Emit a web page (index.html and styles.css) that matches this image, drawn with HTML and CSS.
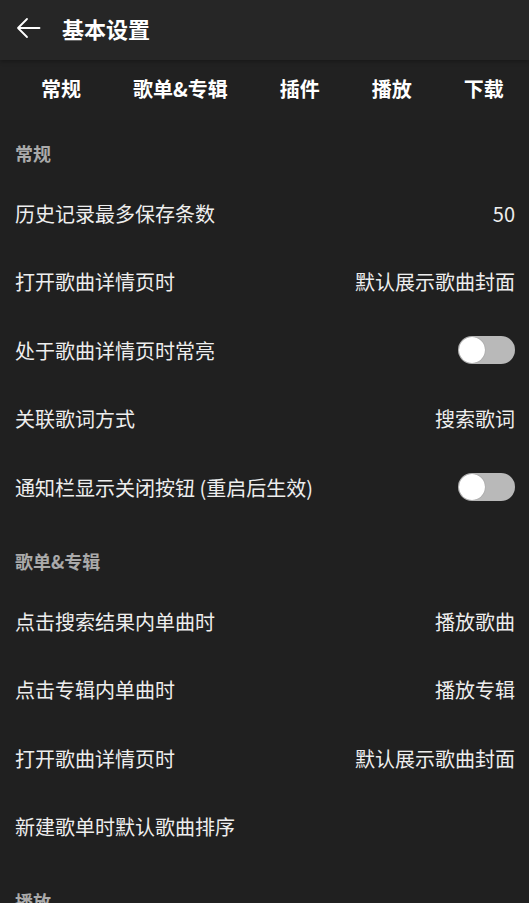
FILE: index.html
```html
<!DOCTYPE html>
<html lang="zh-CN">

<head>
  <meta charset="UTF-8">
  <title>基本设置</title>
  <meta name="viewport" content="width=device-width,initial-scale=1.0">
  <link rel="stylesheet" href="styles.css">
</head>

<body>

  <header class="app-bar">
    <svg class="back" width="26" height="26" viewBox="0 0 26 26">
      <path d="M24.5 13H3M12 4l-9 9 9 9" fill="none" stroke="#fff" stroke-width="1.8" stroke-linecap="round" stroke-linejoin="round" />
    </svg>
    <h1>基本设置</h1>
  </header>

  <nav class="tabs">
    <span class="tab">常规</span>
    <span class="tab">歌单&amp;专辑</span>
    <span class="tab">插件</span>
    <span class="tab">播放</span>
    <span class="tab">下载</span>
  </nav>

  <main class="content">
    <section class="group">
      <h2>常规</h2>
      <div class="row"><span>历史记录最多保存条数</span><span class="value">50</span></div>
      <div class="row"><span>打开歌曲详情页时</span><span class="value">默认展示歌曲封面</span></div>
      <div class="row"><span>处于歌曲详情页时常亮</span><span class="switch"></span></div>
      <div class="row"><span>关联歌词方式</span><span class="value">搜索歌词</span></div>
      <div class="row"><span>通知栏显示关闭按钮 (重启后生效)</span><span class="switch"></span></div>
    </section>

    <section class="group">
      <h2>歌单&amp;专辑</h2>
      <div class="row"><span>点击搜索结果内单曲时</span><span class="value">播放歌曲</span></div>
      <div class="row"><span>点击专辑内单曲时</span><span class="value">播放专辑</span></div>
      <div class="row"><span>打开歌曲详情页时</span><span class="value">默认展示歌曲封面</span></div>
      <div class="row"><span>新建歌单时默认歌曲排序</span></div>
    </section>

    <section class="group">
      <h2>播放</h2>
    </section>
  </main>

</body>

</html>
```

FILE: styles.css
```css
html,
body {
  margin: 0;
  height: 100%;
  overflow: hidden;
}

body {
  background-color: #202020;
  color: #eeeeee;
  font-family: "Noto Sans CJK SC", "Noto Sans", sans-serif;
}

.app-bar {
  height: 60px;
  box-sizing: border-box;
  display: flex;
  align-items: center;
  padding: 0 0 5px 15px;
  background-color: #262626;
  position: relative;
  z-index: 2;
  box-shadow: 0 2px 4px rgba(0, 0, 0, 0.25);
}

.app-bar .back {
  display: block;
  margin-right: 21px;
}

.app-bar h1 {
  margin: 0;
  font-size: 22px;
  font-weight: 700;
  color: #ffffff;
  line-height: 1;
}

.tabs {
  height: 60px;
  display: flex;
  align-items: center;
  padding: 0 0 2px 15px;
  box-sizing: border-box;
  background-color: #212121;
  white-space: nowrap;
}

.tab {
  padding: 0 26px;
  font-size: 20px;
  font-weight: 700;
  color: #ffffff;
  line-height: 1;
}

.group + .group {
  margin-top: 7px;
}

.group h2 {
  margin: 0;
  padding: 20px 15px 12.75px;
  font-size: 18px;
  font-weight: 700;
  line-height: 26px;
  color: #aaaaaa;
}

.row {
  height: 68.5px;
  display: flex;
  align-items: center;
  justify-content: space-between;
  padding: 0 14px 0 15px;
  font-size: 20px;
}

.value {
  color: #eeeeee;
}

.switch {
  width: 57px;
  height: 28px;
  border-radius: 14px;
  background-color: #b9b9b9;
  position: relative;
}

.switch::after {
  content: "";
  position: absolute;
  left: 1px;
  top: 1px;
  width: 26px;
  height: 26px;
  border-radius: 50%;
  background-color: #ffffff;
  box-shadow: 0 0 1px rgba(0, 0, 0, 0.4);
}
```
